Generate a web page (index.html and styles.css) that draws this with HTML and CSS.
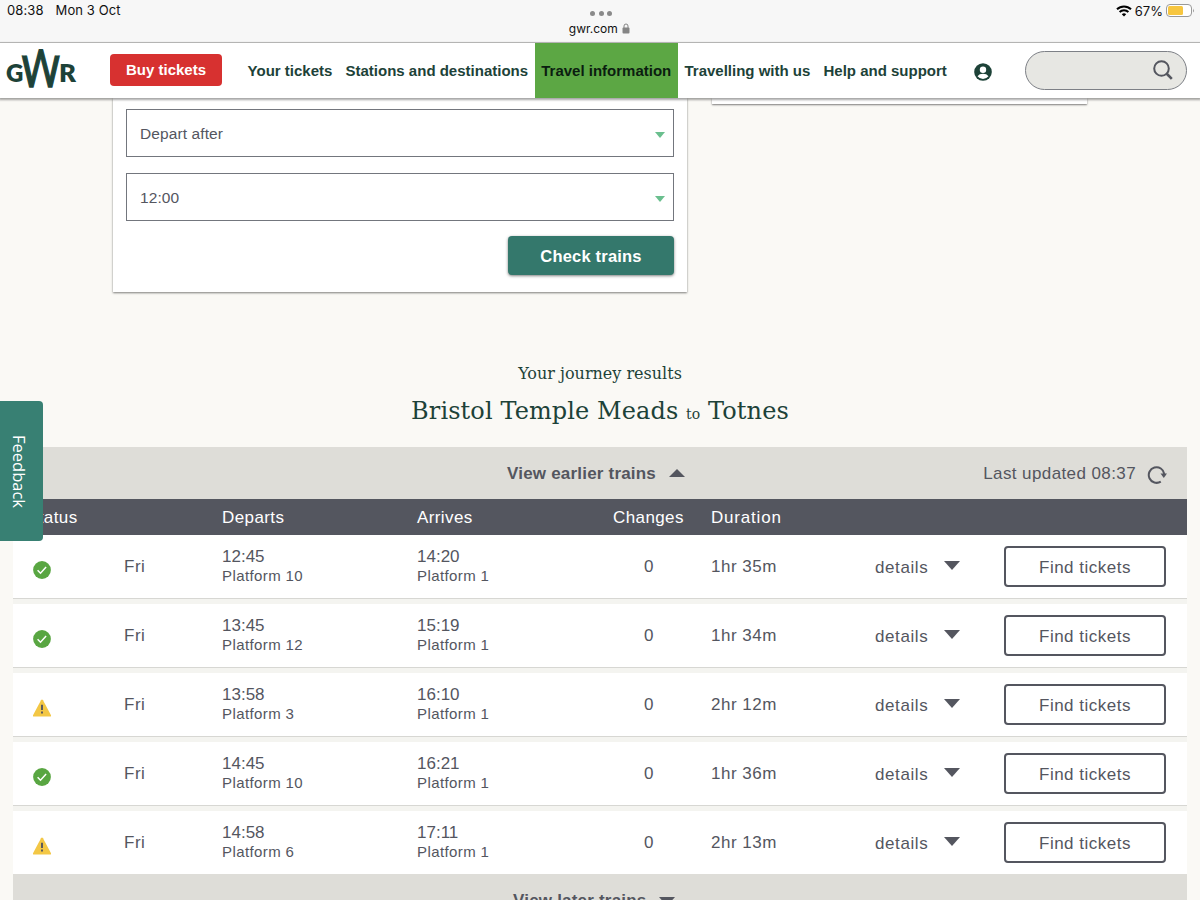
FILE: index.html
```html
<!DOCTYPE html>
<html lang="en">
<head>
  <meta charset="UTF-8">
  <meta name="viewport" content="width=device-width, initial-scale=1.0">
  <title>Check trains - GWR</title>
  <link rel="stylesheet" href="styles.css">
</head>
<body>
  <svg class="defs" width="0" height="0">
    <symbol id="ok" viewBox="0 0 18 18">
      <circle cx="9" cy="9" r="8.9" fill="#59a642"/>
      <path d="M4.6 9.2l2.9 3 5.6-6.2" fill="none" stroke="#fff" stroke-width="1.5"/>
    </symbol>
    <symbol id="warn" viewBox="0 0 18 18">
      <path d="M8 1.2Q9 0 10 1.2L18 16.2Q18.5 17.5 17 17.5H1Q-.5 17.5 0 16.2Z" fill="#f3c745"/>
      <path d="M9 5.8V11M9 12.5v2" stroke="#54565f" stroke-width="1.9"/>
    </symbol>
  </svg>

  <div class="status-bar">
    <div class="clock"><span>08:38</span><span>Mon 3 Oct</span></div>
    <div class="address">
      <div class="dots"><i></i><i></i><i></i></div>
      <div class="url">gwr.com
        <svg width="8" height="11" viewBox="0 0 8 11"><rect x="0.5" y="4.5" width="7" height="6" rx="1" fill="#858585"/><path d="M2 5V3a2 2 0 0 1 4 0v2" fill="none" stroke="#858585"/></svg>
      </div>
    </div>
    <div class="battery">
      <svg width="16" height="12" viewBox="0 0 16 12" fill="none" stroke="#000" stroke-width="2"><path d="M1 4.3a10 10 0 0 1 14 0M3.6 7a6.3 6.3 0 0 1 8.8 0"/><path d="M8 11.5L5.8 9.3a3.1 3.1 0 0 1 4.4 0z" fill="#000" stroke="none"/></svg>
      <span>67%</span>
      <svg width="29" height="13" viewBox="0 0 29 13"><rect x="0.5" y="0.5" width="25" height="12" rx="3.5" fill="#fff" stroke="#999"/><rect x="2" y="2" width="15" height="9" rx="1.5" fill="#f7c640"/><path d="M27 4.5q1.5 2 0 4z" fill="#888"/></svg>
    </div>
  </div>

  <header class="nav">
    <svg class="logo" width="72" height="40" viewBox="0 0 72 40">
      <defs><clipPath id="wclip"><path d="M14 6.5H29V0H41V6.5H58V40H14Z"/></clipPath></defs>
      <text x="0" y="33" class="logo-letter">G</text>
      <g clip-path="url(#wclip)"><text class="logo-w" transform="translate(14 38) scale(1 1.45)" textLength="41.5" lengthAdjust="spacingAndGlyphs">W</text></g>
      <text x="53" y="33" class="logo-letter" textLength="17" lengthAdjust="spacingAndGlyphs">R</text>
    </svg>
    <a class="buy">Buy tickets</a>
    <nav class="links">
      <a>Your tickets</a>
      <a>Stations and destinations</a>
      <a class="active">Travel information</a>
      <a>Travelling with us</a>
      <a>Help and support</a>
    </nav>
    <svg class="user" width="18" height="18" viewBox="0 0 18 18"><circle cx="9" cy="9" r="8.8" fill="#1d4238"/><circle cx="9" cy="6.7" r="3.2" fill="#fff"/><path d="M3.5 13.2q1.8-2.4 5.5-2.4t5.5 2.4q-2.2 2.7-5.5 2.7t-5.5-2.7z" fill="#fff"/></svg>
    <div class="search">
      <svg width="20" height="20" viewBox="0 0 20 20" fill="none" stroke="#54565f" stroke-width="2"><circle cx="8.5" cy="8.5" r="7.3"/><path d="M13.5 13.5l5.3 5.3" stroke-width="2.6"/></svg>
    </div>
  </header>

  <main>
    <div class="top">
      <form class="planner">
        <div class="select"><span>Depart after</span><i class="caret"></i></div>
        <div class="select"><span>12:00</span><i class="caret"></i></div>
        <button class="check" type="button">Check trains</button>
      </form>
      <div class="side-card"></div>
    </div>

    <h3>Your journey results</h3>
    <h2><span class="from">Bristol Temple Meads</span> <small>to</small> <span class="dest">Totnes</span></h2>

    <section class="results">
      <div class="more-bar earlier">
        <b>View earlier trains</b><i class="arrow up"></i>
        <div class="updated">Last updated 08:37
          <svg width="20" height="20" viewBox="0 0 20 20"><path d="M13.8 16.6A7.8 7.8 0 1 1 17.3 9" fill="none" stroke="#54565f" stroke-width="2"/><path d="M13.5 8.5H20L16.8 13z" fill="#54565f"/></svg>
        </div>
      </div>
      <div class="row head">
        <span class="status">Status</span><span></span><span>Departs</span><span>Arrives</span><span>Changes</span><span class="duration">Duration</span>
      </div>
      <div class="row">
        <svg class="icon"><use href="#ok"/></svg><span>Fri</span>
        <div class="stop">12:45<small>Platform 10</small></div>
        <div class="stop">14:20<small>Platform 1</small></div>
        <span class="changes">0</span><span>1hr 35m</span>
        <span class="details">details<i class="arrow"></i></span>
        <button class="find">Find tickets</button>
      </div>
      <div class="row">
        <svg class="icon"><use href="#ok"/></svg><span>Fri</span>
        <div class="stop">13:45<small>Platform 12</small></div>
        <div class="stop">15:19<small>Platform 1</small></div>
        <span class="changes">0</span><span>1hr 34m</span>
        <span class="details">details<i class="arrow"></i></span>
        <button class="find">Find tickets</button>
      </div>
      <div class="row">
        <svg class="icon"><use href="#warn"/></svg><span>Fri</span>
        <div class="stop">13:58<small>Platform 3</small></div>
        <div class="stop">16:10<small>Platform 1</small></div>
        <span class="changes">0</span><span>2hr 12m</span>
        <span class="details">details<i class="arrow"></i></span>
        <button class="find">Find tickets</button>
      </div>
      <div class="row">
        <svg class="icon"><use href="#ok"/></svg><span>Fri</span>
        <div class="stop">14:45<small>Platform 10</small></div>
        <div class="stop">16:21<small>Platform 1</small></div>
        <span class="changes">0</span><span>1hr 36m</span>
        <span class="details">details<i class="arrow"></i></span>
        <button class="find">Find tickets</button>
      </div>
      <div class="row last">
        <svg class="icon"><use href="#warn"/></svg><span>Fri</span>
        <div class="stop">14:58<small>Platform 6</small></div>
        <div class="stop">17:11<small>Platform 1</small></div>
        <span class="changes">0</span><span>2hr 13m</span>
        <span class="details">details<i class="arrow"></i></span>
        <button class="find">Find tickets</button>
      </div>
      <div class="more-bar later"><b>View later trains</b><i class="arrow"></i></div>
    </section>
  </main>

  <a class="feedback">Feedback</a>
</body>
</html>
```

FILE: styles.css
```css
* {
  box-sizing: border-box;
}

body {
  margin: 0;
  height: 900px;
  overflow: hidden;
  background: #faf9f5;
  color: #54565f;
  font-family: "Liberation Sans", Arial, sans-serif;
  font-size: 17px;
}

.defs {
  display: block;
}

/* Tablet status bar */
.status-bar {
  display: grid;
  grid-template-columns: 1fr auto 1fr;
  height: 43px;
  padding: 0 5px 0 7px;
  background: #f7f7f7;
  border-bottom: 1px solid #cbcbca;
  color: #111;
  font: 13px/16px Inter, sans-serif;
}

.clock {
  display: flex;
  gap: 12px;
  padding-top: 2px;
  letter-spacing: 0.1px;
}

.dots {
  display: flex;
  justify-content: center;
  gap: 3.5px;
  padding: 11px 0 5px 0;
}

.dots i {
  width: 5px;
  height: 5px;
  border-radius: 50%;
  background: #8a8a8a;
}

.url {
  padding-right: 3px;
  font-size: 12px;
}

.url svg {
  margin-left: 1px;
  vertical-align: -1px;
}

.battery {
  display: flex;
  justify-content: flex-end;
  align-items: center;
  gap: 3px;
  height: 21px;
}

/* Site header */
.nav {
  position: relative;
  z-index: 2;
  display: flex;
  align-items: center;
  height: 55px;
  padding: 0 13px 0 6px;
  background: #fff;
  box-shadow: 0 1px 2px 1px rgba(0, 0, 0, 0.35);
  font: bold 15px "Liberation Sans", Arial, sans-serif;
  color: #1d4238;
}

.logo {
  margin-top: -3px;
  fill: #1d4238;
}

.logo-letter {
  font: 800 24px Lato, sans-serif;
}

.logo-w {
  font: 400 36px Lato, sans-serif;
  stroke: #1d4238;
  stroke-width: 1px;
}

.buy {
  width: 112px;
  margin: -1px 0 0 32px;
  background: #d73130;
  border-radius: 4px;
  color: #fff;
  line-height: 32px;
  text-align: center;
}

.links {
  display: flex;
  margin-left: 19px;
  line-height: 55px;
  white-space: nowrap;
}

.links a {
  padding: 0 6.6px;
}

.links .active {
  background: #5ca744;
  color: #0b1d10;
}

.user {
  margin: 3px 0 0 21px;
}

.search {
  display: flex;
  justify-content: flex-end;
  width: 162px;
  height: 39px;
  margin: -1px 0 0 auto;
  padding: 8px 13px;
  background: #e7e7e3;
  border: 1px solid #7d8086;
  border-radius: 20px;
}

/* Journey planner */
.top {
  display: flex;
  align-items: flex-start;
  gap: 25px;
  padding-left: 113px;
}

.planner {
  display: flex;
  flex-direction: column;
  gap: 16px;
  width: 574px;
  height: 194px;
  padding: 11px 13px 0 13px;
  background: #fff;
  box-shadow: 0 1px 2px rgba(0, 0, 0, 0.5);
}

.side-card {
  width: 375px;
  height: 6px;
  background: #fff;
  box-shadow: 0 1px 2px rgba(0, 0, 0, 0.5);
}

.select {
  display: flex;
  justify-content: space-between;
  align-items: center;
  height: 48px;
  padding: 1px 8px 0 13px;
  border: 1px solid #73767d;
  font-size: 15.5px;
  letter-spacing: 0.1px;
}

.caret {
  border: 5.5px solid transparent;
  border-top: 6px solid #6abf8e;
  border-bottom: 0;
  margin-top: 3px;
}

.check {
  align-self: flex-end;
  width: 166px;
  height: 39px;
  margin-top: -1px;
  padding: 2px 0 0;
  border: 0;
  border-radius: 4px;
  background: #34786c;
  box-shadow: 0 1px 3px rgba(0, 0, 0, 0.5);
  color: #fff;
  font: bold 16.5px "Liberation Sans", Arial, sans-serif;
  letter-spacing: 0.2px;
}

/* Headings */
h2,
h3 {
  margin: 0;
  color: #1d4238;
  font-family: "DejaVu Serif", serif;
  font-weight: normal;
  text-align: center;
}

h3 {
  padding-top: 70px;
  font-size: 16px;
  line-height: 23px;
}

h2 {
  padding-top: 9px;
  font-size: 24px;
  line-height: 34px;
  height: 62px;
  letter-spacing: 0.1px;
}

h2 small {
  font-size: 14px;
}

/* Results */
.results {
  width: 1174px;
  margin-left: 13px;
  background: #f4f4f0;
}

.more-bar {
  display: flex;
  align-items: center;
  height: 52px;
  background: #deddd8;
}

.more-bar b {
  letter-spacing: 0.2px;
}

.earlier {
  padding: 1px 20px 0 494px;
}

.later {
  padding: 2px 0 0 500px;
}

.arrow {
  border: 8px solid transparent;
  border-top: 9px solid #54565f;
  border-bottom: 0;
  margin-left: 13px;
}

.arrow.up {
  margin-top: -2px;
  border-top: 0;
  border-bottom: 8px solid #54565f;
}

.updated {
  display: flex;
  align-items: center;
  gap: 11px;
  margin-left: auto;
  letter-spacing: 0.4px;
}

.updated svg {
  margin-top: 2px;
}

.row {
  display: grid;
  grid-template-columns: 111px 98px 195px 196px 98px 164px 129px 162px;
  align-items: center;
  height: 64px;
  margin-bottom: 5px;
  background: #fff;
  border-bottom: 1px solid #d7d7d3;
  letter-spacing: 0.5px;
}

.row.head {
  height: 36px;
  margin: 0;
  padding-top: 2px;
  border: 0;
  background: #54565f;
  color: #fff;
  letter-spacing: 0.4px;
}

.row.last {
  height: 63px;
  margin: 0;
  border: 0;
}

.status {
  padding-left: 14px;
}

.duration {
  letter-spacing: 0.8px;
}

.icon {
  width: 18px;
  height: 18px;
  margin: 6px 0 0 20px;
}

.stop {
  padding-bottom: 2px;
  line-height: 20px;
  letter-spacing: 0;
}

.stop small {
  display: block;
  font-size: 15px;
  line-height: 18px;
  letter-spacing: 0.4px;
}

.changes {
  padding-left: 31px;
}

.details {
  display: flex;
  align-items: center;
  padding-top: 2px;
  letter-spacing: 0.6px;
}

.details .arrow {
  margin: -4px 0 0 16px;
}

.find {
  height: 41px;
  padding-top: 3px;
  border: 2px solid #54565f;
  border-radius: 4px;
  background: #fff;
  color: #54565f;
  font: 17px "Liberation Sans", Arial, sans-serif;
  letter-spacing: 0.5px;
}

/* Side tab */
.feedback {
  position: absolute;
  left: 0;
  top: 401px;
  z-index: 3;
  width: 43px;
  height: 140px;
  background: #388073;
  border-radius: 0 4px 4px 0;
  color: #fff;
  font: 16.5px/40px "Open Sans", sans-serif;
  text-align: center;
  writing-mode: vertical-rl;
  padding-right: 4px;
}
```
